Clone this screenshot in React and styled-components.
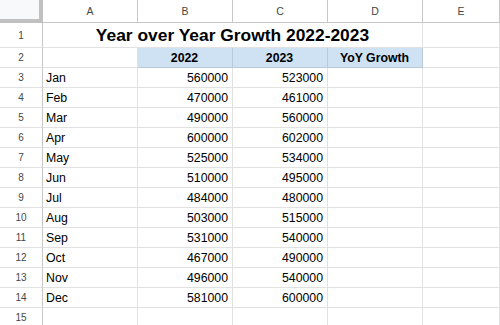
import styled, { createGlobalStyle } from "styled-components";

const GlobalStyle = createGlobalStyle`
  html, body {
    margin: 0;
    padding: 0;
    background: #fff;
    overflow: hidden;
  }
  body {
    font-family: "Liberation Sans", Arial, sans-serif;
  }
`;

const columns = ["A", "B", "C", "D", "E"];

const sales = [
  ["Jan", 560000, 523000],
  ["Feb", 470000, 461000],
  ["Mar", 490000, 560000],
  ["Apr", 600000, 602000],
  ["May", 525000, 534000],
  ["Jun", 510000, 495000],
  ["Jul", 484000, 480000],
  ["Aug", 503000, 515000],
  ["Sep", 531000, 540000],
  ["Oct", 467000, 490000],
  ["Nov", 496000, 540000],
  ["Dec", 581000, 600000],
];

const App = () => {
  return (
    <>
      <GlobalStyle />
      <Sheet>
        <Corner />
        {columns.map((c) => (
          <ColHeader key={c}>{c}</ColHeader>
        ))}

        <RowHeader $h={25}>1</RowHeader>
        <TitleCell>Year over Year Growth 2022-2023</TitleCell>
        <Cell $h={25} />

        <RowHeader>2</RowHeader>
        <Cell />
        <Cell $head>2022</Cell>
        <Cell $head>2023</Cell>
        <Cell $head>YoY Growth</Cell>
        <Cell />

        {sales.map(([month, a, b], i) => (
          <Row key={month} n={i + 3} month={month} a={a} b={b} />
        ))}

        <RowHeader>15</RowHeader>
        <Cell />
        <Cell />
        <Cell />
        <Cell />
        <Cell />
      </Sheet>
    </>
  );
};

const Row = ({ n, month, a, b }) => (
  <>
    <RowHeader>{n}</RowHeader>
    <Cell>{month}</Cell>
    <Cell $right>{a}</Cell>
    <Cell $right>{b}</Cell>
    <Cell />
    <Cell />
  </>
);

export default App;

const Sheet = styled.div`
  display: grid;
  grid-template-columns: 43px 95px 95px 95px 95px 1fr;
  width: 500px;
  height: 325px;
  overflow: hidden;
  align-content: start;
  color: #000;
`;

const Corner = styled.div`
  box-sizing: border-box;
  height: 23px;
  background: #f8f9fa;
  border-right: 4px solid #c0c0c0;
  border-bottom: 4px solid #c0c0c0;
`;

const ColHeader = styled.div`
  box-sizing: border-box;
  height: 23px;
  display: flex;
  align-items: center;
  justify-content: center;
  font-size: 10.5px;
  color: #444746;
  background: #fff;
  border-right: 1px solid #c7c7c7;
  border-bottom: 1px solid #c7c7c7;
`;

const RowHeader = styled.div`
  box-sizing: border-box;
  height: ${(p) => p.$h || 20}px;
  display: flex;
  align-items: center;
  justify-content: center;
  font-size: 10px;
  color: #444746;
  background: #fff;
  border-right: 1px solid #c7c7c7;
  border-bottom: 1px solid #e1e1e1;
`;

const Cell = styled.div`
  box-sizing: border-box;
  height: ${(p) => p.$h || 20}px;
  display: flex;
  align-items: center;
  justify-content: ${(p) =>
    p.$head ? "center" : p.$right ? "flex-end" : "flex-start"};
  padding: 1px 4px 0 3px;
  font-size: 12.3px;
  font-weight: ${(p) => (p.$head ? 700 : 400)};
  background: ${(p) => (p.$head ? "#cfe2f3" : "#fff")};
  border-right: 1px solid ${(p) => (p.$head ? "#b9c9d8" : "#e1e1e1")};
  border-bottom: 1px solid ${(p) => (p.$head ? "#b9c9d8" : "#e1e1e1")};
  white-space: nowrap;
`;

const TitleCell = styled.div`
  grid-column: span 4;
  box-sizing: border-box;
  height: 25px;
  display: flex;
  align-items: center;
  justify-content: center;
  padding-top: 1px;
  font-size: 17.4px;
  font-weight: 700;
  border-right: 1px solid #e1e1e1;
  border-bottom: 1px solid #e1e1e1;
`;
